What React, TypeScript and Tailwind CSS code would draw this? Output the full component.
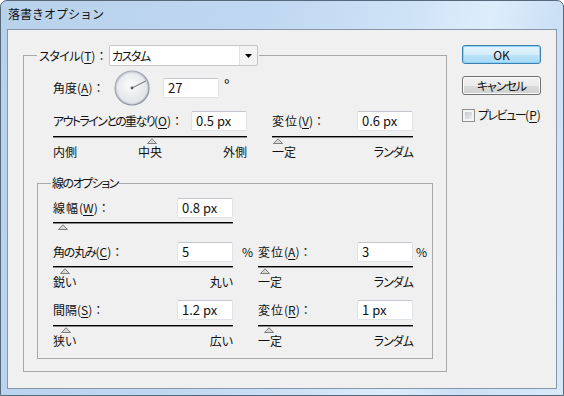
import React from 'react';

// アクセスキー付きラベル
const Acc = ({ t, k, tr = '' }: { t: string; k: string; tr?: string }) => (
  <span className="whitespace-nowrap">
    <span className={`[font-feature-settings:'palt'] ${tr}`}>{t}</span>(<span className="underline underline-offset-[2px]">{k}</span>)：
  </span>
);

const Field = ({ v }: { v: string }) => (
  <div className="h-[20px] w-[56px] shrink-0 rounded-[2px] border border-[#dfe3e8] border-t-[#c3c7cd] bg-white pl-[4px] text-[13px] leading-[18px]">
    {v}
  </div>
);

const Thumb = ({ className }: { className: string }) => (
  <svg width="10" height="6" viewBox="0 0 10 6" className={className}>
    <polygon points="0.5,5.5 5,0.8 9.5,5.5" fill="#d9d9d9" stroke="#7d7d7d" />
  </svg>
);

const Slider = ({ thumb, labels }: { thumb: string; labels?: string[] }) => (
  <div>
    <div className="h-[1px] bg-black" />
    <div className="h-[1px] bg-[#8a8a8a]" />
    <Thumb className={thumb} />
    {labels && (
      <div className="flex h-[16px] justify-between leading-[16px] [font-feature-settings:'palt']">
        {labels.map((l) => (
          <span key={l} className={l === 'ランダム' ? 'tracking-[-1px]' : ''}>
            {l}
          </span>
        ))}
      </div>
    )}
  </div>
);

const Dial = () => (
  <svg width="36" height="36" viewBox="0 0 36 36" className="block shrink-0">
    <defs>
      <radialGradient id="face" cx="45%" cy="40%" r="65%">
        <stop offset="0" stopColor="#fcfcfc" />
        <stop offset="1" stopColor="#dfe1e5" />
      </radialGradient>
      <linearGradient id="ring" x1="0" y1="0" x2="1" y2="1">
        <stop offset="0" stopColor="#aab1bb" />
        <stop offset="1" stopColor="#868e99" />
      </linearGradient>
    </defs>
    <circle cx="18" cy="18" r="17" fill="#cdd1d6" stroke="url(#ring)" strokeWidth="1.2" />
    <circle cx="18" cy="18" r="14.8" fill="url(#face)" stroke="#e9ebee" strokeWidth="0.8" />
    <line x1="18" y1="18" x2="32" y2="10.9" stroke="#6a6a6a" strokeWidth="1" />
    <circle cx="18" cy="18" r="1.4" fill="#555" />
  </svg>
);

const Dropdown = () => (
  <div className="flex h-[21px] w-[149px] rounded-[2px] border border-[#c6c6c6] bg-[#f3f3f3]">
    <div className="h-full w-[130px] border-r border-[#e2e2e2] bg-white pl-[2px] leading-[19px] tracking-[-1.5px] [font-feature-settings:'palt']">
      カスタム
    </div>
    <div className="flex flex-1 items-center justify-center">
      <svg width="7" height="4" viewBox="0 0 7 4">
        <polygon points="0,0 7,0 3.5,4" fill="#000" />
      </svg>
    </div>
  </div>
);

export default function App() {
  return (
    <div className="h-[396px] w-[564px] font-['Noto_Sans_CJK_JP',sans-serif] text-[12px] leading-[16px] text-[#111]">
      <div className="flex h-full flex-col rounded-t-[7px] border border-[#56687c] bg-[linear-gradient(105deg,#b9d2ec_0%,#bfd7f0_40%,#cfe3f7_62%,#deedfb_74%,#cbe0f6_84%,#d8e9f9_100%)] px-[6px] pb-[6px]">
        <div className="flex h-[28px] shrink-0 items-center pb-[2px] pl-[1px]">落書きオプション</div>

        <div className="flex flex-1 border border-[#8796a8] bg-[#f0f0f0] pl-[15px] pt-[15px]">
          <fieldset className="w-[424px] self-start border border-[#a8a8a8] px-[13px] pb-[12px]">
            <legend className="pl-[2px] pr-[1px]">
              <div className="flex items-center">
                <span className="w-[70px]">
                  <Acc t="スタイル" k="T" tr="tracking-[-0.5px]" />
                </span>
                <Dropdown />
              </div>
            </legend>

            <div className="pl-[16px]">
              <div className="mt-[4px] flex h-[35px] items-center">
                <span className="w-[61px]">
                  <Acc t="角度" k="A" />
                </span>
                <Dial />
                <div className="ml-[13px]">
                  <Field v="27" />
                </div>
                <span className="ml-[5px] self-start pt-[7px] text-[15px] leading-[15px]">°</span>
              </div>

              <div className="mt-[6px] flex">
                <div className="w-[194px]">
                  <div className="flex items-center justify-between">
                    <Acc t="アウトラインとの重なり" k="O" tr="tracking-[-1.6px]" />
                    <Field v="0.5 px" />
                  </div>
                  <div className="mt-[5px]">
                    <Slider thumb="ml-[94px] block" labels={['内側', '中央', '外側']} />
                  </div>
                </div>
                <div className="ml-[25px] w-[141px]">
                  <div className="flex items-center justify-between">
                    <Acc t="変位" k="V" tr="tracking-[1px]" />
                    <Field v="0.6 px" />
                  </div>
                  <div className="mt-[5px]">
                    <Slider thumb="ml-[1px] block" labels={['一定', 'ランダム']} />
                  </div>
                </div>
              </div>
            </div>

            <fieldset className="mt-[15px] border border-[#a8a8a8] pb-[9px] pl-[15px]">
              <legend className="-ml-[2px] px-[1px] tracking-[-1.5px] [font-feature-settings:'palt']">線のオプション</legend>

              <div className="pt-[7px]">
                <div className="w-[180px]">
                  <div className="flex items-center justify-between">
                    <Acc t="線幅" k="W" tr="tracking-[1px]" />
                    <Field v="0.8 px" />
                  </div>
                  <div className="mt-[4px]">
                    <Slider thumb="ml-[5px] block" />
                  </div>
                </div>

                <div className="mt-[12px] flex">
                  <div className="w-[205px]">
                    <div className="flex items-center">
                      <span className="flex-1">
                        <Acc t="角の丸み" k="C" tr="tracking-[-1.2px]" />
                      </span>
                      <Field v="5" />
                      <span className="w-[25px] pl-[9px]">%</span>
                    </div>
                    <div className="mt-[4px] w-[180px]">
                      <Slider thumb="ml-[7px] block" labels={['鋭い', '丸い']} />
                    </div>
                  </div>
                  <div className="w-[174px]">
                    <div className="flex items-center">
                      <span className="flex-1">
                        <Acc t="変位" k="A" tr="tracking-[1px]" />
                      </span>
                      <Field v="3" />
                      <span className="w-[19px] pl-[3px]">%</span>
                    </div>
                    <div className="mt-[4px] w-[155px]">
                      <Slider thumb="ml-[2px] block" labels={['一定', 'ランダム']} />
                    </div>
                  </div>
                </div>

                <div className="mt-[10px] flex">
                  <div className="w-[205px]">
                    <div className="flex w-[180px] items-center justify-between">
                      <Acc t="間隔" k="S" />
                      <Field v="1.2 px" />
                    </div>
                    <div className="mt-[5px] w-[180px]">
                      <Slider thumb="ml-[8px] block" labels={['狭い', '広い']} />
                    </div>
                  </div>
                  <div className="w-[155px]">
                    <div className="flex items-center justify-between">
                      <Acc t="変位" k="R" tr="tracking-[1px]" />
                      <Field v="1 px" />
                    </div>
                    <div className="mt-[5px]">
                      <Slider thumb="ml-[6px] block" labels={['一定', 'ランダム']} />
                    </div>
                  </div>
                </div>
              </div>
            </fieldset>
          </fieldset>

          <div className="ml-[15px] flex w-[79px] flex-col">
            <button className="h-[19px] rounded-[3px] border border-[#3c7fb1] bg-[linear-gradient(#e5f4fc_0%,#d4edfb_50%,#bde4f9_51%,#a7d9f5_100%)] leading-[16px] shadow-[inset_0_0_0_1px_#8ed4f7]">
              OK
            </button>
            <button className="mt-[12px] h-[19px] rounded-[3px] border border-[#707070] bg-[linear-gradient(#f2f2f2_0%,#ebebeb_50%,#dddddd_51%,#cfcfcf_100%)] leading-[16px] tracking-[-1px] shadow-[inset_0_0_0_1px_#fcfcfc] [font-feature-settings:'palt']">
              キャンセル
            </button>
            <div className="mt-[12px] flex items-center">
              <div className="h-[13px] w-[13px] shrink-0 border border-[#8f8f8f] bg-[#f4f4f4] p-[2px]">
                <div className="h-full w-full bg-[linear-gradient(135deg,#c3c7cc,#eceef0)]" />
              </div>
              <span className="ml-[3px] whitespace-nowrap">
                <span className="tracking-[-1.5px] [font-feature-settings:'palt']">プレビュー</span>(<span className="underline underline-offset-[2px]">P</span>)
              </span>
            </div>
          </div>
        </div>
      </div>
    </div>
  );
}
